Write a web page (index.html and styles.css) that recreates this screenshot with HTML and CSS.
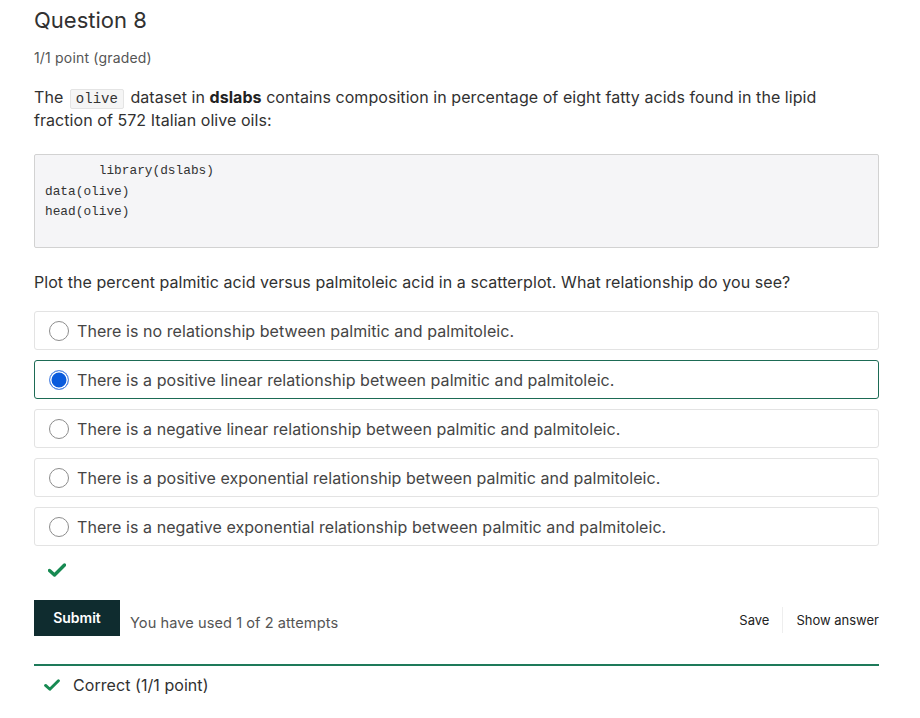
FILE: index.html
```html
<!DOCTYPE html>
<html>
<head>
<meta charset="utf-8">
<link rel="stylesheet" href="styles.css">
</head>
<body>
<div class="page">
  <h2 class="title">Question 8</h2>
  <div class="points">1/1 point (graded)</div>
  <p class="intro">The <code class="inline">olive</code> dataset in <strong>dslabs</strong> contains composition in percentage of eight fatty acids found in the lipid fraction of 572 Italian olive oils:</p>
  <pre class="code">       library(dslabs)
data(olive)
head(olive)
</pre>
  <p class="question">Plot the percent palmitic acid versus palmitoleic acid in a scatterplot. What relationship do you see?</p>
  <div class="options">
    <label class="option"><span class="radio"></span>There is no relationship between palmitic and palmitoleic.</label>
    <label class="option selected"><span class="radio checked"></span>There is a positive linear relationship between palmitic and palmitoleic.</label>
    <label class="option"><span class="radio"></span>There is a negative linear relationship between palmitic and palmitoleic.</label>
    <label class="option"><span class="radio"></span>There is a positive exponential relationship between palmitic and palmitoleic.</label>
    <label class="option"><span class="radio"></span>There is a negative exponential relationship between palmitic and palmitoleic.</label>
  </div>
  <div class="status">
    <svg width="18" height="14" viewBox="0 0 18 14"><path d="M1.5 7.5 L6.5 12 L16.5 2" fill="none" stroke="#178a52" stroke-width="3.4" stroke-linecap="round" stroke-linejoin="round"/></svg>
  </div>
  <div class="actions">
    <button class="submit">Submit</button>
    <span class="attempts">You have used 1 of 2 attempts</span>
    <div class="right">
      <span class="link">Save</span>
      <span class="sep"></span>
      <span class="link">Show answer</span>
    </div>
  </div>
  <div class="feedback">
    <svg width="16" height="12" viewBox="0 0 18 14"><path d="M1.5 7.5 L6.5 12 L16.5 2" fill="none" stroke="#178a52" stroke-width="3.4" stroke-linecap="round" stroke-linejoin="round"/></svg>
    <span>Correct (1/1 point)</span>
  </div>
</div>
</body>
</html>
```
FILE: styles.css
```css
* { box-sizing: border-box; }
html, body { margin: 0; padding: 0; background: #fff; }
body {
  font-family: Inter, "Noto Sans", Arial, sans-serif;
  color: #454545;
  letter-spacing: 0.06px;
}
.page {
  width: 845px;
  margin-left: 34px;
  padding-top: 6px;
}
.title {
  font-size: 22px;
  font-weight: 400;
  color: #313131;
  margin: 0;
  line-height: 28px;
  letter-spacing: 0;
}
.points {
  font-size: 14px;
  color: #555;
  margin-top: 15px;
  line-height: 18px;
  letter-spacing: 0.18px;
}
.intro {
  font-size: 16px;
  line-height: 22px;
  color: #313131;
  margin: 19px 0 0;
  padding-right: 16px;
}
.intro strong { font-weight: 700; color: #222; }
.inline {
  display: inline-block;
  font-family: "Liberation Mono", "DejaVu Sans Mono", monospace;
  font-size: 14px;
  line-height: 16px;
  letter-spacing: 0;
  background: #f5f5f5;
  border: 1px solid #e4e4e4;
  border-radius: 2px;
  padding: 1px 5px;
  margin: 0 2px;
  color: #333;
}
.code {
  margin: 23px 0 0;
  height: 94px;
  background: #f5f5f7;
  border: 1px solid #d2d2d2;
  border-radius: 2px;
  padding: 6px 10px;
  font-family: "Liberation Mono", "DejaVu Sans Mono", monospace;
  font-size: 12.8px;
  letter-spacing: 0;
  line-height: 20.5px;
  color: #333;
}
.question {
  font-size: 16px;
  line-height: 22px;
  color: #313131;
  margin: 23px 0 0;
}
.options {
  margin-top: 18px;
  display: flex;
  flex-direction: column;
  gap: 10px;
}
.option {
  display: flex;
  align-items: center;
  height: 39px;
  border: 1px solid #e3e3e3;
  border-radius: 3px;
  padding-left: 14px;
  font-size: 16px;
  color: #454545;
}
.option.selected { border-color: #1d6b55; }
.radio {
  width: 20px;
  height: 20px;
  border: 1px solid #8d8d8d;
  border-radius: 50%;
  margin-right: 8px;
  flex: none;
  background: #fff;
}
.radio.checked {
  background: #0a5bdc;
  border-color: #5e8fe6;
  box-shadow: inset 0 0 0 1.5px #fff;
}
.status {
  height: 54px;
  padding: 15px 0 0 14px;
}
.actions {
  display: flex;
  align-items: center;
  height: 36px;
}
.submit {
  background: #0f2c2f;
  color: #fff;
  border: none;
  border-radius: 0;
  height: 36px;
  width: 86px;
  font-family: Inter, "Noto Sans", Arial, sans-serif;
  font-size: 14px;
  font-weight: 600;
  padding: 0 0 2px;
}
.attempts {
  font-size: 14.6px;
  color: #555;
  margin-left: 10px;
  margin-top: 10px;
}
.right {
  margin-left: auto;
  display: flex;
  align-items: center;
  font-size: 13px;
  letter-spacing: 0;
  color: #222;
  padding-top: 4px;
}
.sep {
  width: 1px;
  height: 26px;
  background: #eee;
  margin: 0 13px;
}
.feedback {
  margin-top: 28px;
  border-top: 2px solid #1e7a5a;
  display: flex;
  align-items: center;
  padding: 9px 0 0 10px;
  font-size: 16px;
  color: #313131;
}
.feedback svg { margin-right: 13px; }
```
